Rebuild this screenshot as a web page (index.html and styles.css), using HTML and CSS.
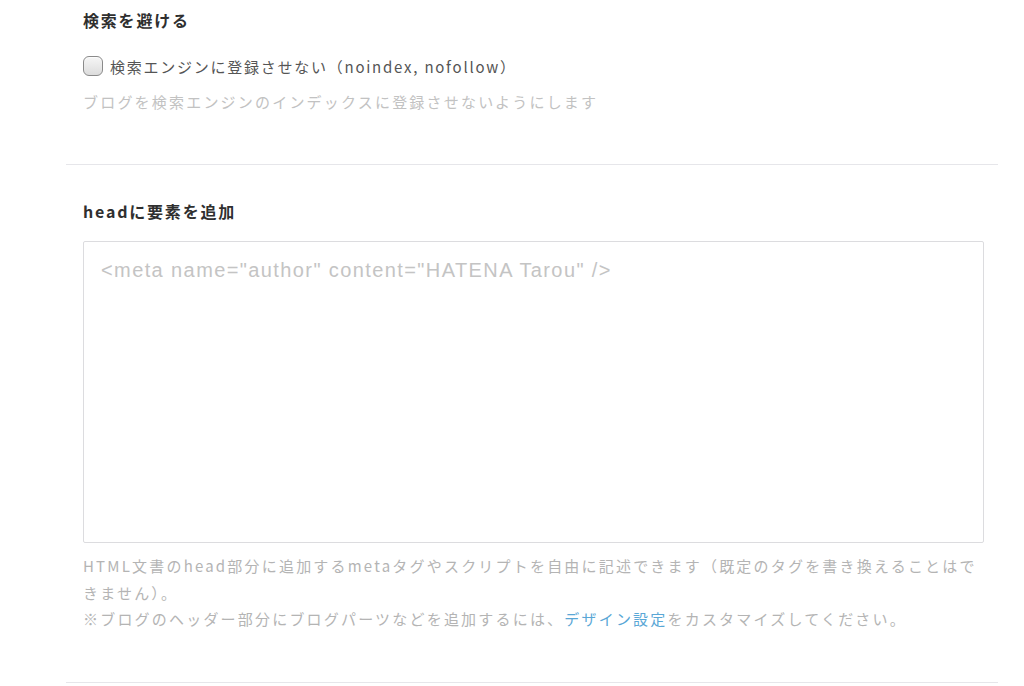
FILE: index.html
```html
<!DOCTYPE html>
<html lang="ja">
<head>
<meta charset="utf-8">
<title>設定</title>
<link rel="stylesheet" href="styles.css">
</head>
<body>
<div class="page">
  <section class="section section-first">
    <h2 class="title">検索を避ける</h2>
    <label class="check"><span class="box"></span><span class="check-label">検索エンジンに登録させない（noindex, nofollow）</span></label>
    <p class="desc">ブログを検索エンジンのインデックスに登録させないようにします</p>
  </section>
  <section class="section section-second">
    <h2 class="title">headに要素を追加</h2>
    <textarea class="code" placeholder='&lt;meta name="author" content="HATENA Tarou" /&gt;'></textarea>
    <p class="help">HTML文書のhead部分に追加するmetaタグやスクリプトを自由に記述できます（既定のタグを書き換えることはできません）。<br>※ブログのヘッダー部分にブログパーツなどを追加するには、<a class="link" href="#">デザイン設定</a>をカスタマイズしてください。</p>
  </section>
</div>
</body>
</html>
```

FILE: styles.css
```css
html, body {
  margin: 0;
  padding: 0;
  background: #fff;
}
body {
  font-family: "Noto Sans CJK JP", "Noto Sans", sans-serif;
  color: #333;
}
.page {
  width: 932px;
  margin-left: 66px;
}
.section {
  border-bottom: 1px solid #e6e6ea;
  padding-left: 17px;
  padding-right: 14px;
}
.section-first {
  padding-top: 8px;
  padding-bottom: 50px;
}
.section-second {
  padding-top: 34px;
  padding-bottom: 49px;
}
.title {
  margin: 0;
  font-size: 16px;
  line-height: 24px;
  font-weight: 700;
  letter-spacing: 1.8px;
  color: #2f2f2f;
}
.check {
  display: flex;
  align-items: center;
  margin-top: 22px;
  height: 24px;
  font-size: 15px;
  letter-spacing: 1.75px;
  color: #555;
}
.box {
  width: 20px;
  height: 20px;
  box-sizing: border-box;
  border: 1.5px solid #8a8a8a;
  border-radius: 6px;
  background: linear-gradient(#f6f6f6, #dcdcdc);
  box-shadow: inset 0 1px 1px rgba(255,255,255,0.8);
  margin-right: 7px;
  flex: none;
}
.desc {
  margin: 12px 0 0;
  font-size: 15px;
  line-height: 24px;
  letter-spacing: 2.2px;
  color: #c2c2c2;
}
.code {
  display: block;
  margin-top: 18px;
  width: 901px;
  height: 302px;
  box-sizing: border-box;
  border: 1px solid #dcdcdf;
  border-radius: 2px;
  padding: 16px 17px;
  font-family: "Liberation Sans", Arial, sans-serif;
  font-size: 20px;
  line-height: 24px;
  letter-spacing: 1.4px;
  resize: none;
  outline: none;
}
.code::placeholder {
  color: #c4c4c4;
}
.help {
  margin: 10px 0 0;
  width: 895px;
  font-size: 15px;
  line-height: 26.5px;
  letter-spacing: 2.2px;
  color: #b4b4b4;
}
.link {
  color: #5aa7d6;
  text-decoration: none;
}
```
